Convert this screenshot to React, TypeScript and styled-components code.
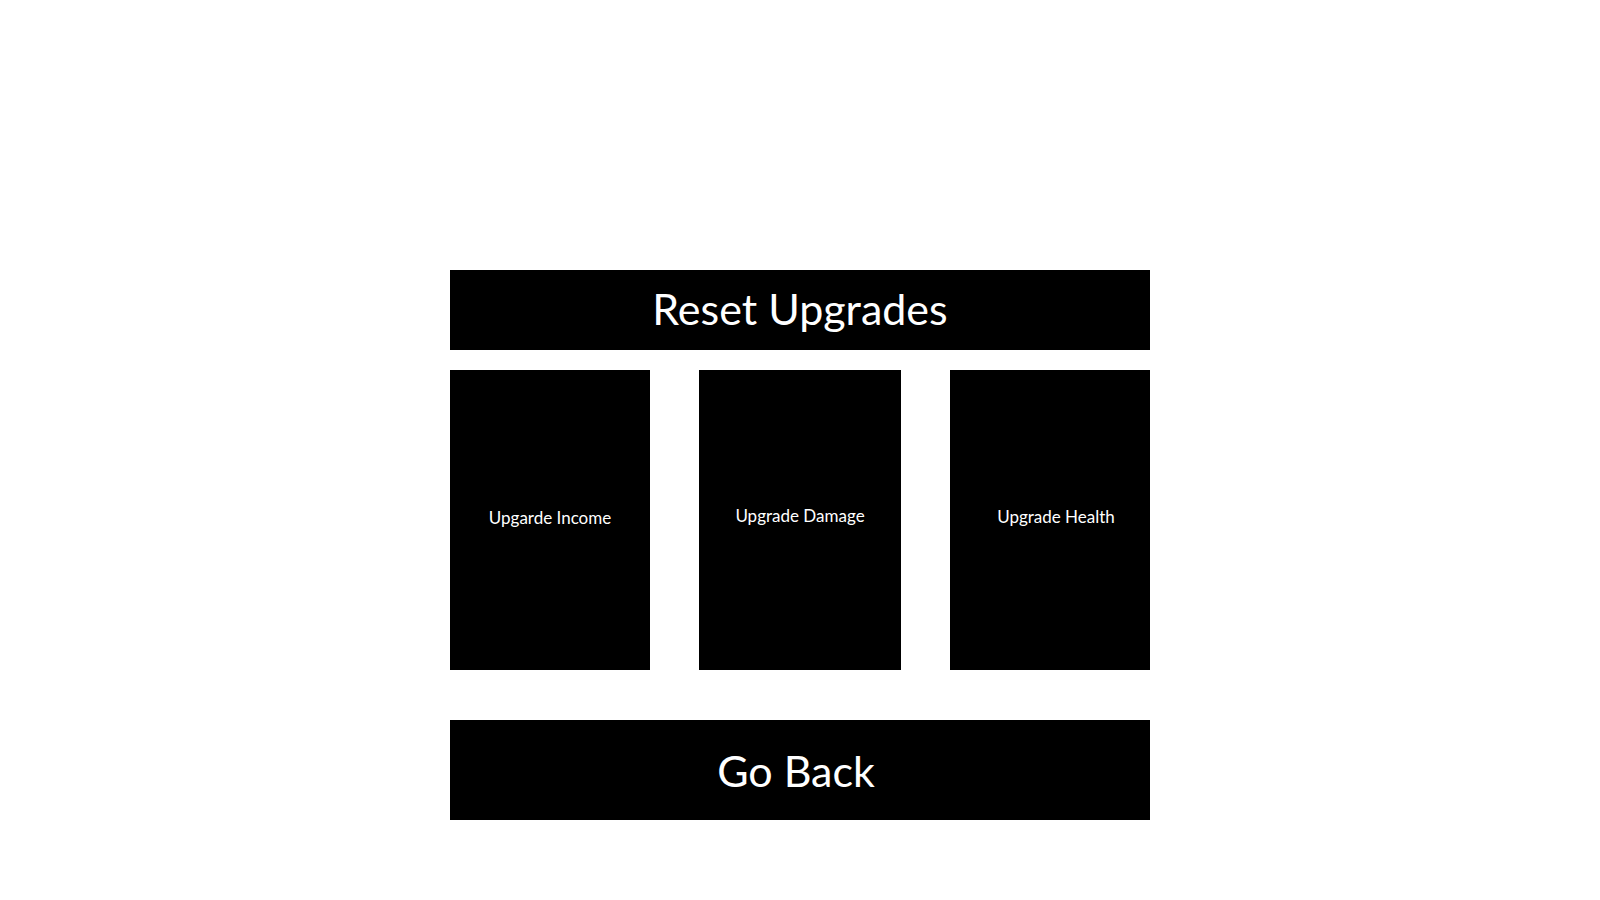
import React from "react";
import styled, { createGlobalStyle } from "styled-components";

const Global = createGlobalStyle`
  html, body { margin: 0; padding: 0; background: #ffffff; }
  body { font-family: Lato, "Open Sans", sans-serif; }
`;

const Page = styled.div`
  width: 1600px;
  height: 900px;
  display: flex;
  justify-content: center;
  padding-top: 270px;
  box-sizing: border-box;
`;

const Column = styled.div`
  width: 700px;
  display: flex;
  flex-direction: column;
`;

const Bar = styled.div<{ $h: number; $mt: number; $dx: number; $dy: number }>`
  height: ${(p) => p.$h}px;
  margin-top: ${(p) => p.$mt}px;
  background: #000;
  color: #fff;
  display: flex;
  align-items: center;
  justify-content: center;
  font-size: 43px;
  padding-right: ${(p) => p.$dx}px;
  padding-bottom: ${(p) => p.$dy}px;
  box-sizing: border-box;
`;

const Cards = styled.div`
  margin-top: 20px;
  height: 300px;
  display: flex;
  justify-content: space-between;
`;

const Card = styled.div<{ $w: number; $dx: number; $dy: number }>`
  width: ${(p) => p.$w}px;
  background: #000;
  color: #fff;
  display: flex;
  align-items: center;
  justify-content: center;
  font-size: 17px;
  padding-left: ${(p) => p.$dx}px;
  padding-bottom: ${(p) => p.$dy}px;
  box-sizing: border-box;
`;

export default function App() {
  return (
    <>
      <Global />
      <Page>
        <Column>
          <Bar $h={80} $mt={0} $dx={0} $dy={4}>Reset Upgrades</Bar>
          <Cards>
            <Card $w={200} $dx={0} $dy={6}>Upgarde Income</Card>
            <Card $w={202} $dx={0} $dy={10}>Upgrade Damage</Card>
            <Card $w={200} $dx={12} $dy={8}>Upgrade Health</Card>
          </Cards>
          <Bar $h={100} $mt={50} $dx={8} $dy={0}>Go Back</Bar>
        </Column>
      </Page>
    </>
  );
}
